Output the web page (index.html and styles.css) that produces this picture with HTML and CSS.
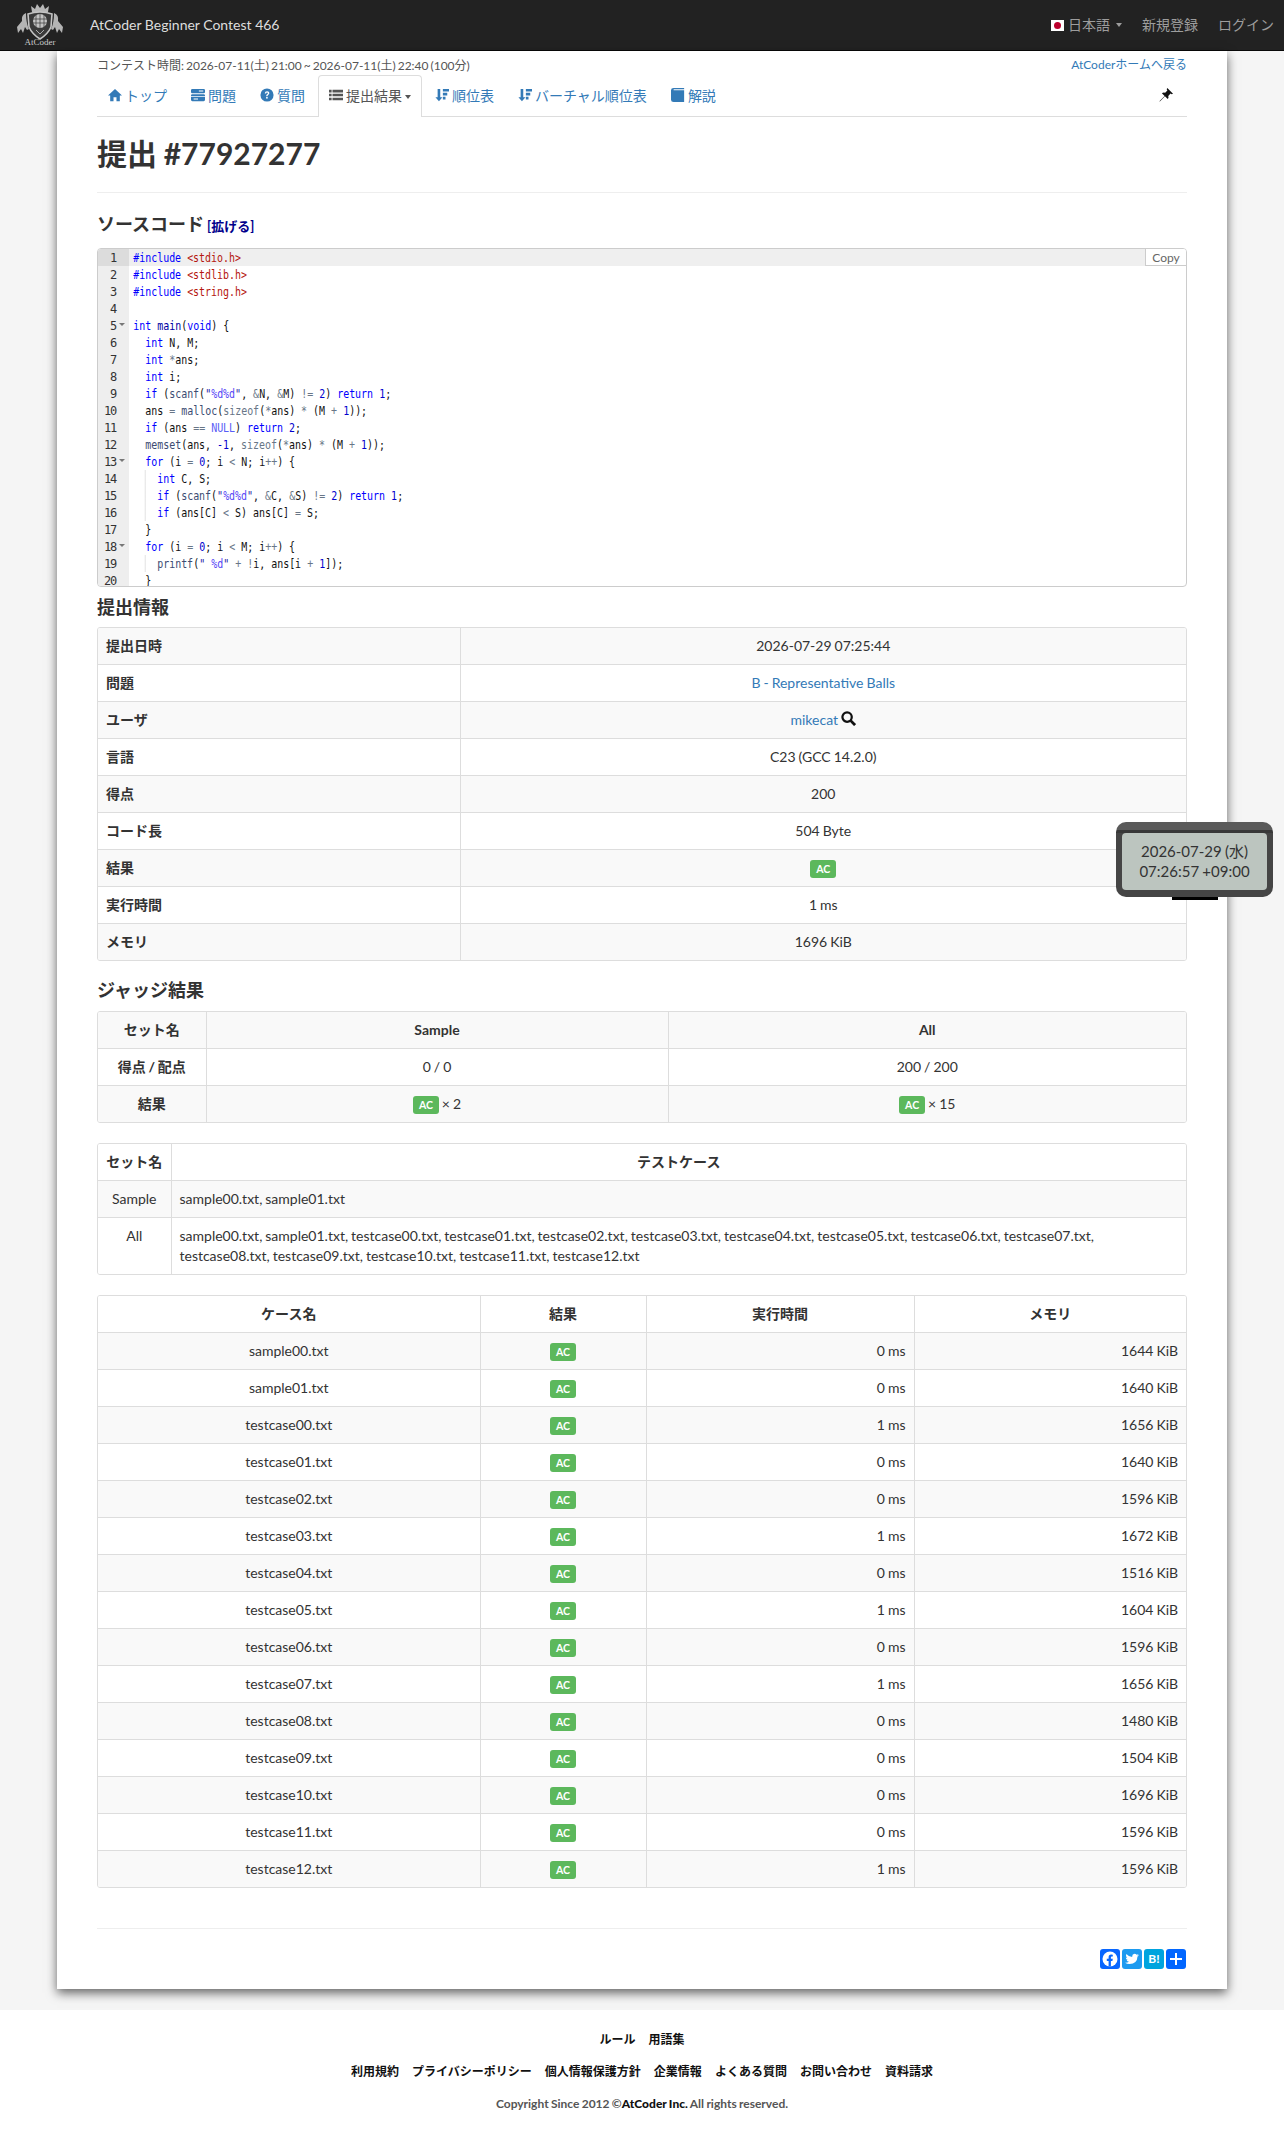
FILE: index.html
```html
<!DOCTYPE html>
<html lang="ja">
<head>
    <meta charset="UTF-8">
    <title>提出 #77927277 - AtCoder Beginner Contest 466</title>
    <link rel="stylesheet" href="styles.css">
</head>
<body>

    <!-- Navbar -->
    <div class="navbar">
        <div class="brand">
            <svg class="logo" viewBox="0 0 50 44">
                <path d="M17 11 L16 5 L20 8 L22 3 L25 7 L28 3 L30 8 L34 5 L33 11 Z" fill="#b8b8b8"/>
                <path d="M13 13 Q25 9 37 13 L36 26 Q33 33 25 38 Q17 33 14 26 Z" fill="#3a3a3a" stroke="#c4c4c4" stroke-width="1.6"/>
                <circle cx="25" cy="20" r="7" fill="#c4c4c4"/>
                <path d="M18 18 H32 M18 22 H32 M25 13 V27 M21 14 V26 M29 14 V26" stroke="#3a3a3a" stroke-width=".7" fill="none"/>
                <path d="M21 29 L25 33 L29 29" stroke="#aaa" fill="none"/>
                <path d="M11 12 Q6 14 7 20 L2 26 L3 32 L6 28 L8 32 L10 26 L12 29 L14 28 Q11 22 11 12 Z" fill="#b4b4b4"/>
                <path d="M39 12 Q44 14 43 20 L48 26 L47 32 L44 28 L42 32 L40 26 L38 29 L36 28 Q39 22 39 12 Z" fill="#b4b4b4"/>
            </svg>
            <span class="logo-name">AtCoder</span>
        </div>
        <a class="contest-name" href="#">AtCoder Beginner Contest 466</a>
        <div class="nav-right">
            <span class="lang"><span class="flag"><span class="flag-dot"></span></span>日本語<span class="caret"></span></span>
            <a href="#">新規登録</a>
            <a href="#">ログイン</a>
        </div>
    </div>

    <div class="main-container">

        <div class="contest-info">
            <span>コンテスト時間: 2026-07-11(土) 21:00 ~ 2026-07-11(土) 22:40 (100分)</span>
            <a href="#">AtCoderホームへ戻る</a>
        </div>

        <!-- Tabs -->
        <ul class="nav-tabs">
            <li><a href="#"><svg class="icon" viewBox="0 0 16 16"><path d="M8 1 L16 8.5 H13.5 V15 H9.7 V10.5 H6.3 V15 H2.5 V8.5 H0 Z" fill="currentColor"/></svg>トップ</a></li>
            <li><a href="#"><svg class="icon" viewBox="0 0 16 16"><path d="M1.5 1 H14.5 Q16 1 16 2.5 V4.5 Q16 6 14.5 6 H1.5 Q0 6 0 4.5 V2.5 Q0 1 1.5 1 Z M1.5 7 H14.5 Q16 7 16 8.5 V9 H0 V8.5 Q0 7 1.5 7 Z M0 10 H16 V13.5 Q16 15 14.5 15 H1.5 Q0 15 0 13.5 Z" fill="currentColor"/><path d="M9 3.5 H14 M3 12.5 H8" stroke="#fff" stroke-width="1.2"/></svg>問題</a></li>
            <li><a href="#"><svg class="icon" viewBox="0 0 16 16"><circle cx="8" cy="8" r="7.5" fill="currentColor"/><path d="M5.4 6.2 Q5.6 3.6 8.1 3.6 Q10.7 3.6 10.7 5.8 Q10.7 7.2 9.3 7.9 Q8.6 8.3 8.6 9.4 H7.1 Q7 7.6 8.2 7 Q9 6.6 9 5.9 Q9 5.1 8.1 5.1 Q7.1 5.1 7 6.2 Z" fill="#fff"/><rect x="7" y="10.3" width="1.8" height="1.8" fill="#fff"/></svg>質問</a></li>
            <li class="active"><a href="#"><svg class="icon" viewBox="0 0 16 16"><path d="M0 2 H3 V5 H0 Z M4 2 H16 V5 H4 Z M0 6.5 H3 V9.5 H0 Z M4 6.5 H16 V9.5 H4 Z M0 11 H3 V14 H0 Z M4 11 H16 V14 H4 Z" fill="currentColor"/></svg>提出結果<span class="caret"></span></a></li>
            <li><a href="#"><svg class="icon" viewBox="0 0 16 16"><path d="M3 1 H6 V10.5 H8.5 L4.5 15 L.5 10.5 H3 Z M9 1 H16 V4 H9 Z M9 5.5 H14 V8.5 H9 Z M9 10 H12 V13 H9 Z" fill="currentColor"/></svg>順位表</a></li>
            <li><a href="#"><svg class="icon" viewBox="0 0 16 16"><path d="M3 1 H6 V10.5 H8.5 L4.5 15 L.5 10.5 H3 Z M9 1 H16 V4 H9 Z M9 5.5 H14 V8.5 H9 Z M9 10 H12 V13 H9 Z" fill="currentColor"/></svg>バーチャル順位表</a></li>
            <li><a href="#"><svg class="icon" viewBox="0 0 16 16"><path d="M3 0 H15 V1.5 H3.5 Q2.5 1.5 3 2.5 H15 V16 H3 Q0 16 0 13.5 V2.5 Q0 0 3 0 Z" fill="currentColor"/></svg>解説</a></li>
            <li class="pin">
                <svg class="icon" viewBox="0 0 16 16"><path d="M9.5 0 L16 6.5 L14.6 7.2 L13.2 6.4 L10.6 9 Q11.4 11 10 12.6 L6.8 9.4 L1 15.5 L.5 15 L6.4 9 L3.3 5.9 Q5 4.6 7 5.4 L9.6 2.8 L8.8 1.4 Z" fill="#111"/></svg>
            </li>
        </ul>

        <h2 class="page-title">提出 #77927277</h2>
        <hr class="rule">

        <h3 class="source-title">ソースコード<a class="expand" href="#">[拡げる]</a></h3>

        <!-- Source code -->
        <div class="editor">
            <button class="copy-btn" type="button">Copy</button>
            <div class="code-line current"><span class="ln">1</span><span class="code"><span class="k">#include</span> <span class="i">&lt;stdio.h&gt;</span></span></div>
            <div class="code-line"><span class="ln">2</span><span class="code"><span class="k">#include</span> <span class="i">&lt;stdlib.h&gt;</span></span></div>
            <div class="code-line"><span class="ln">3</span><span class="code"><span class="k">#include</span> <span class="i">&lt;string.h&gt;</span></span></div>
            <div class="code-line"><span class="ln">4</span><span class="code"></span></div>
            <div class="code-line"><span class="ln fold">5</span><span class="code"><span class="k">int</span> <span class="m">main</span>(<span class="k">void</span>) {</span></div>
            <div class="code-line"><span class="ln">6</span><span class="code">  <span class="k">int</span> N, M;</span></div>
            <div class="code-line"><span class="ln">7</span><span class="code">  <span class="k">int</span> <span class="o">*</span>ans;</span></div>
            <div class="code-line"><span class="ln">8</span><span class="code">  <span class="k">int</span> i;</span></div>
            <div class="code-line"><span class="ln">9</span><span class="code">  <span class="k">if</span> (<span class="f">scanf</span>(<span class="s">"<span class="e">%d%d</span>"</span>, <span class="o">&amp;</span>N, <span class="o">&amp;</span>M) <span class="o">!=</span> <span class="n">2</span>) <span class="k">return</span> <span class="n">1</span>;</span></div>
            <div class="code-line"><span class="ln">10</span><span class="code">  ans <span class="o">=</span> <span class="f">malloc</span>(<span class="o">sizeof</span>(<span class="o">*</span>ans) <span class="o">*</span> (M <span class="o">+</span> <span class="n">1</span>));</span></div>
            <div class="code-line"><span class="ln">11</span><span class="code">  <span class="k">if</span> (ans <span class="o">==</span> <span class="l">NULL</span>) <span class="k">return</span> <span class="n">2</span>;</span></div>
            <div class="code-line"><span class="ln">12</span><span class="code">  <span class="f">memset</span>(ans, <span class="n">-1</span>, <span class="o">sizeof</span>(<span class="o">*</span>ans) <span class="o">*</span> (M <span class="o">+</span> <span class="n">1</span>));</span></div>
            <div class="code-line"><span class="ln fold">13</span><span class="code">  <span class="k">for</span> (i <span class="o">=</span> <span class="n">0</span>; i <span class="o">&lt;</span> N; i<span class="o">++</span>) {</span></div>
            <div class="code-line guide"><span class="ln">14</span><span class="code">    <span class="k">int</span> C, S;</span></div>
            <div class="code-line guide"><span class="ln">15</span><span class="code">    <span class="k">if</span> (<span class="f">scanf</span>(<span class="s">"<span class="e">%d%d</span>"</span>, <span class="o">&amp;</span>C, <span class="o">&amp;</span>S) <span class="o">!=</span> <span class="n">2</span>) <span class="k">return</span> <span class="n">1</span>;</span></div>
            <div class="code-line guide"><span class="ln">16</span><span class="code">    <span class="k">if</span> (ans[C] <span class="o">&lt;</span> S) ans[C] <span class="o">=</span> S;</span></div>
            <div class="code-line"><span class="ln">17</span><span class="code">  }</span></div>
            <div class="code-line"><span class="ln fold">18</span><span class="code">  <span class="k">for</span> (i <span class="o">=</span> <span class="n">0</span>; i <span class="o">&lt;</span> M; i<span class="o">++</span>) {</span></div>
            <div class="code-line guide"><span class="ln">19</span><span class="code">    <span class="f">printf</span>(<span class="s">" <span class="e">%d</span>"</span> <span class="o">+</span> <span class="o">!</span>i, ans[i <span class="o">+</span> <span class="n">1</span>]);</span></div>
            <div class="code-line"><span class="ln">20</span><span class="code">  }</span></div>
        </div>

        <h3 class="section-title info-title">提出情報</h3>
        <div class="table-wrap info-wrap">
            <table class="info-table">
                <tr><th>提出日時</th><td>2026-07-29 07:25:44</td></tr>
                <tr><th>問題</th><td><a href="#">B - Representative Balls</a></td></tr>
                <tr><th>ユーザ</th><td><a href="#">mikecat</a> <svg class="search-icon" viewBox="0 0 16 16"><circle cx="6.5" cy="6.5" r="5" fill="none" stroke="#111" stroke-width="2.4"/><path d="M10 10 L15 15" stroke="#111" stroke-width="3"/></svg></td></tr>
                <tr><th>言語</th><td>C23 (GCC 14.2.0)</td></tr>
                <tr><th>得点</th><td>200</td></tr>
                <tr><th>コード長</th><td>504 Byte</td></tr>
                <tr><th>結果</th><td><span class="label-ac">AC</span></td></tr>
                <tr><th>実行時間</th><td>1 ms</td></tr>
                <tr><th>メモリ</th><td>1696 KiB</td></tr>
            </table>
        </div>

        <h3 class="section-title judge-title">ジャッジ結果</h3>
        <div class="table-wrap">
            <table class="summary-table">
                <tr><th>セット名</th><th>Sample</th><th>All</th></tr>
                <tr><th>得点 / 配点</th><td>0 / 0</td><td>200 / 200</td></tr>
                <tr><th>結果</th><td><span class="label-ac">AC</span> × 2</td><td><span class="label-ac">AC</span> × 15</td></tr>
            </table>
        </div>

        <div class="table-wrap">
            <table class="set-table">
                <tr class="plain"><th>セット名</th><th>テストケース</th></tr>
                <tr><td>Sample</td><td>sample00.txt, sample01.txt</td></tr>
                <tr><td>All</td><td>sample00.txt, sample01.txt, testcase00.txt, testcase01.txt, testcase02.txt, testcase03.txt, testcase04.txt, testcase05.txt, testcase06.txt, testcase07.txt, testcase08.txt, testcase09.txt, testcase10.txt, testcase11.txt, testcase12.txt</td></tr>
            </table>
        </div>

        <div class="table-wrap">
            <table class="case-table">
                <tr class="plain"><th>ケース名</th><th>結果</th><th>実行時間</th><th>メモリ</th></tr>
                <tr><td>sample00.txt</td><td><span class="label-ac">AC</span></td><td>0 ms</td><td>1644 KiB</td></tr>
                <tr><td>sample01.txt</td><td><span class="label-ac">AC</span></td><td>0 ms</td><td>1640 KiB</td></tr>
                <tr><td>testcase00.txt</td><td><span class="label-ac">AC</span></td><td>1 ms</td><td>1656 KiB</td></tr>
                <tr><td>testcase01.txt</td><td><span class="label-ac">AC</span></td><td>0 ms</td><td>1640 KiB</td></tr>
                <tr><td>testcase02.txt</td><td><span class="label-ac">AC</span></td><td>0 ms</td><td>1596 KiB</td></tr>
                <tr><td>testcase03.txt</td><td><span class="label-ac">AC</span></td><td>1 ms</td><td>1672 KiB</td></tr>
                <tr><td>testcase04.txt</td><td><span class="label-ac">AC</span></td><td>0 ms</td><td>1516 KiB</td></tr>
                <tr><td>testcase05.txt</td><td><span class="label-ac">AC</span></td><td>1 ms</td><td>1604 KiB</td></tr>
                <tr><td>testcase06.txt</td><td><span class="label-ac">AC</span></td><td>0 ms</td><td>1596 KiB</td></tr>
                <tr><td>testcase07.txt</td><td><span class="label-ac">AC</span></td><td>1 ms</td><td>1656 KiB</td></tr>
                <tr><td>testcase08.txt</td><td><span class="label-ac">AC</span></td><td>0 ms</td><td>1480 KiB</td></tr>
                <tr><td>testcase09.txt</td><td><span class="label-ac">AC</span></td><td>0 ms</td><td>1504 KiB</td></tr>
                <tr><td>testcase10.txt</td><td><span class="label-ac">AC</span></td><td>0 ms</td><td>1696 KiB</td></tr>
                <tr><td>testcase11.txt</td><td><span class="label-ac">AC</span></td><td>0 ms</td><td>1596 KiB</td></tr>
                <tr><td>testcase12.txt</td><td><span class="label-ac">AC</span></td><td>1 ms</td><td>1596 KiB</td></tr>
            </table>
        </div>

        <hr class="rule bottom-rule">

        <!-- Share buttons -->
        <div class="share">
            <span class="share-btn fb"><svg viewBox="0 0 20 20"><circle cx="10" cy="10" r="7.5" fill="#fff"/><path d="M8.6 17.5 V12 H6.8 V9.8 H8.6 V8.2 Q8.6 5.6 11.2 5.6 Q12.2 5.6 12.8 5.7 V7.6 H11.8 Q10.9 7.6 10.9 8.5 V9.8 H12.8 L12.4 12 H10.9 V17.5 Z" fill="#0866ff"/></svg></span>
            <span class="share-btn tw"><svg viewBox="0 0 20 20"><path d="M17 6 Q16 6.5 15.2 6.6 Q16.1 6 16.5 5 Q15.6 5.5 14.7 5.7 Q13.8 4.8 12.6 4.8 Q10.2 4.9 10.2 7.3 V7.9 Q6.6 7.7 4.3 5 Q3.2 7.2 5.1 8.8 Q4.4 8.8 3.8 8.4 Q3.9 10.4 5.9 10.9 Q5.3 11.1 4.6 11 Q5.2 12.6 7 12.7 Q5.4 14 3 13.8 Q5 15.1 7.5 15.1 Q15.2 15 15.5 7.6 Q16.4 7 17 6 Z" fill="#fff"/></svg></span>
            <span class="share-btn hb">B!</span>
            <span class="share-btn more"><svg viewBox="0 0 20 20"><path d="M9 4 H11 V9 H16 V11 H11 V16 H9 V11 H4 V9 H9 Z" fill="#fff"/></svg></span>
        </div>
    </div>

    <!-- Footer -->
    <div class="footer">
        <ul class="footer-links">
            <li>ルール</li>
            <li>用語集</li>
        </ul>
        <ul class="footer-links">
            <li>利用規約</li>
            <li>プライバシーポリシー</li>
            <li>個人情報保護方針</li>
            <li>企業情報</li>
            <li>よくある質問</li>
            <li>お問い合わせ</li>
            <li>資料請求</li>
        </ul>
        <p class="copyright">Copyright Since 2012 ©<b>AtCoder Inc.</b> All rights reserved.</p>
    </div>

    <!-- Floating clock -->
    <div class="clock">
        <div class="clock-face">2026-07-29 (水)<br>07:26:57 +09:00</div>
    </div>

</body>
</html>
```

FILE: styles.css
```css
* {
    box-sizing: border-box;
}
body {
    margin: 0;
    background: #f5f5f5;
    color: #333;
    font-family: Lato, "Noto Sans CJK JP", sans-serif;
    font-size: 14px;
    line-height: 20px;
    word-spacing: -0.6px;
}
a {
    color: #337ab7;
    text-decoration: none;
}

/* Navbar */
.navbar {
    display: flex;
    align-items: center;
    height: 51px;
    background: #222;
    border-bottom: 1px solid #080808;
    padding-right: 10px;
}
.brand {
    width: 90px;
    height: 50px;
    padding-left: 15px;
    position: relative;
}
.logo {
    display: block;
    width: 50px;
    height: 44px;
    margin-top: 1px;
}
.logo-name {
    position: absolute;
    left: 15px;
    top: 36px;
    width: 50px;
    text-align: center;
    color: #ccc;
    font-family: "Liberation Serif", serif;
    font-size: 9px;
    line-height: 12px;
}
.contest-name {
    color: #ddd;
    font-size: 14px;
    word-spacing: 0;
}
.nav-right {
    margin-left: auto;
    display: flex;
    align-items: center;
    gap: 20px;
    color: #9d9d9d;
}
.nav-right a {
    color: #9d9d9d;
}
.lang {
    display: flex;
    align-items: center;
}
.flag {
    width: 13px;
    height: 11px;
    background: #fff;
    margin-right: 4px;
    display: flex;
    align-items: center;
    justify-content: center;
}
.flag-dot {
    width: 7px;
    height: 7px;
    border-radius: 50%;
    background: #bc002d;
}
.caret {
    display: inline-block;
    margin-left: 3px;
    vertical-align: middle;
    border-top: 4px solid;
    border-left: 3.5px solid transparent;
    border-right: 3.5px solid transparent;
}
.lang .caret {
    margin-left: 6px;
}

/* Main */
.main-container {
    width: 1170px;
    margin: 0 auto;
    padding: 0 40px 20px;
    background: #fff;
    box-shadow: 0 4px 10px rgba(0, 0, 0, 0.6);
}
.contest-info {
    height: 24px;
    display: flex;
    justify-content: space-between;
    align-items: flex-end;
    font-size: 12px;
    line-height: 18px;
    color: #555;
    word-spacing: -1.1px;
}
.contest-info a {
    align-self: flex-start;
    margin-top: 5px;
}
.nav-tabs {
    list-style: none;
    display: flex;
    margin: 0;
    padding: 0;
    height: 42px;
    border-bottom: 1px solid #ddd;
}
.nav-tabs li {
    margin-right: 2px;
}
.nav-tabs li a {
    display: block;
    height: 42px;
    padding: 10px;
    border: 1px solid transparent;
    border-bottom: 0;
    border-radius: 4px 4px 0 0;
}
.nav-tabs li.active a {
    background: #fff;
    color: #555;
    border-color: #ddd;
    position: relative;
}
.nav-tabs .pin {
    margin: 0 0 0 auto;
    padding: 11px 11px 0 0;
}
.icon {
    display: inline-block;
    width: 14px;
    height: 14px;
    vertical-align: -1px;
    margin-right: 3px;
}
.page-title {
    margin: 20px 0 22px;
    font-size: 30px;
    line-height: 33px;
    font-weight: 700;
}
.rule {
    margin: 0;
    border: 0;
    border-top: 1px solid #eee;
}
.source-title {
    margin: 21px 0 14px;
    font-size: 18px;
    line-height: 20px;
    font-weight: 700;
}
.expand {
    color: #00008b;
    font-size: 13px;
    line-height: 1;
    margin-left: 3px;
}

/* Source code */
.editor {
    position: relative;
    height: 339px;
    overflow: hidden;
    background: #fff;
    border: 1px solid #ccc;
    border-radius: 4px;
}
.copy-btn {
    position: absolute;
    top: 0;
    right: 0;
    width: 41px;
    height: 17px;
    padding: 0;
    background: #fff;
    color: #666;
    border: 0;
    border-left: 1px solid #ccc;
    border-bottom: 1px solid #ccc;
    font-family: Lato, sans-serif;
    font-size: 12px;
    line-height: 15px;
    z-index: 1;
}
.code-line {
    display: flex;
    height: 17px;
    font-family: "DejaVu Sans Mono", monospace;
    font-size: 12px;
    line-height: 19px;
    color: #111;
}
.code-line.current {
    background: #efefef;
}
.ln {
    flex: none;
    position: relative;
    width: 31px;
    padding-right: 13px;
    background: #eee;
    color: #333;
    text-align: right;
    letter-spacing: -1.2px;
}
.current .ln {
    background: #dcdcdc;
}
.fold::after {
    content: "";
    position: absolute;
    right: 4px;
    top: 6px;
    border-top: 3px solid #777;
    border-left: 3px solid transparent;
    border-right: 3px solid transparent;
}
.code {
    flex: 1;
    padding-left: 5px;
    white-space: pre;
    word-spacing: 0;
    transform: scaleX(0.83);
    transform-origin: 0 0;
}
.guide .code {
    background: linear-gradient(#ddd, #ddd) 19px 0 / 1px 100% no-repeat;
}
.k { color: #0000ff; }
.m { color: #0000a2; }
.i { color: #b5170f; }
.o { color: #687687; }
.n { color: #0000cd; }
.s { color: #1a1aa6; }
.e { color: #5848f6; }
.f { color: #3c4c72; }
.l { color: #585cf6; }

/* Tables */
.section-title {
    font-size: 18px;
    line-height: 20px;
    font-weight: 700;
}
.info-title {
    margin: 10px 0;
}
.judge-title {
    margin: 0 0 11px;
}
.table-wrap {
    border: 1px solid #ddd;
    border-radius: 3px;
    overflow: hidden;
    margin-bottom: 20px;
}
.info-wrap {
    margin-bottom: 19px;
}
table {
    width: 100%;
    table-layout: fixed;
    border-collapse: collapse;
}
th, td {
    padding: 8px;
    border: 1px solid #ddd;
    vertical-align: top;
    text-align: center;
    font-weight: 400;
}
th {
    font-weight: 700;
    white-space: nowrap;
}
tr:first-child th, tr:first-child td {
    border-top: 0;
}
tr:last-child th, tr:last-child td {
    border-bottom: 0;
}
th:first-child, td:first-child {
    border-left: 0;
}
th:last-child, td:last-child {
    border-right: 0;
}
tr:nth-child(odd) {
    background: #f9f9f9;
}
tr:nth-child(even) {
    background: #fff;
}
.case-table tr:nth-child(odd), .set-table tr:nth-child(odd) {
    background: #fff;
}
.case-table tr:nth-child(even), .set-table tr:nth-child(even) {
    background: #f9f9f9;
}
.info-table th:first-child {
    width: 362px;
    text-align: left;
}
.summary-table th:first-child {
    width: 108px;
}
.summary-table th:nth-child(2), .summary-table td:nth-child(2) {
    width: 462px;
}
.set-table th:first-child {
    width: 73px;
}
.set-table td:last-child {
    text-align: left;
}
.case-table th:nth-child(1) {
    width: 382px;
}
.case-table th:nth-child(2) {
    width: 166px;
}
.case-table th:nth-child(3) {
    width: 268px;
}
.case-table td:nth-child(3), .case-table td:nth-child(4) {
    text-align: right;
}
.label-ac {
    display: inline-block;
    height: 18px;
    padding: 3px 6px 0;
    margin-top: 2px;
    background: #5cb85c;
    color: #fff;
    border-radius: 3px;
    font-size: 10.5px;
    font-weight: 700;
    line-height: 12px;
    vertical-align: top;
}
.search-icon {
    width: 15px;
    height: 15px;
    vertical-align: -1px;
}

/* Share */
.bottom-rule {
    margin-top: 40px;
}
.share {
    display: flex;
    justify-content: flex-end;
    gap: 2px;
    margin-top: 20px;
    padding-right: 1px;
}
.share-btn {
    width: 20px;
    height: 20px;
    border-radius: 3px;
    color: #fff;
    font-size: 12px;
    font-weight: 700;
    line-height: 20px;
    text-align: center;
}
.share-btn svg {
    display: block;
}
.fb { background: #0866ff; }
.tw { background: #1d9bf0; }
.hb { background: #00a4de; }
.more { background: #0166ff; }

/* Footer */
.footer {
    margin-top: 21px;
    padding: 20px 0 19px;
    background: #fff;
    text-align: center;
    font-size: 12px;
}
.footer-links {
    list-style: none;
    display: flex;
    justify-content: center;
    gap: 13px;
    margin: 0 0 12px;
    padding: 0;
    color: #111;
    font-weight: 700;
}
.copyright {
    margin: 0;
    font-size: 12px;
    font-weight: 700;
    color: #555;
}
.copyright b {
    color: #111;
}

/* Floating clock */
.clock {
    position: absolute;
    left: 1116px;
    top: 822px;
    width: 157px;
    height: 75px;
    padding: 11px 6px 7px;
    background: linear-gradient(#5a5a5a 0, #5a5a5a 8px, #383838 8px, #383838 11px, #454545 11px);
    border-radius: 10px;
}
.clock::after {
    content: "";
    position: absolute;
    left: 56px;
    bottom: -3px;
    width: 46px;
    height: 3px;
    background: #000;
}
.clock-face {
    height: 57px;
    padding-top: 8px;
    background: #bcc5bf;
    border-radius: 4px;
    color: #333;
    text-align: center;
    font-size: 15px;
    line-height: 20px;
}
```
